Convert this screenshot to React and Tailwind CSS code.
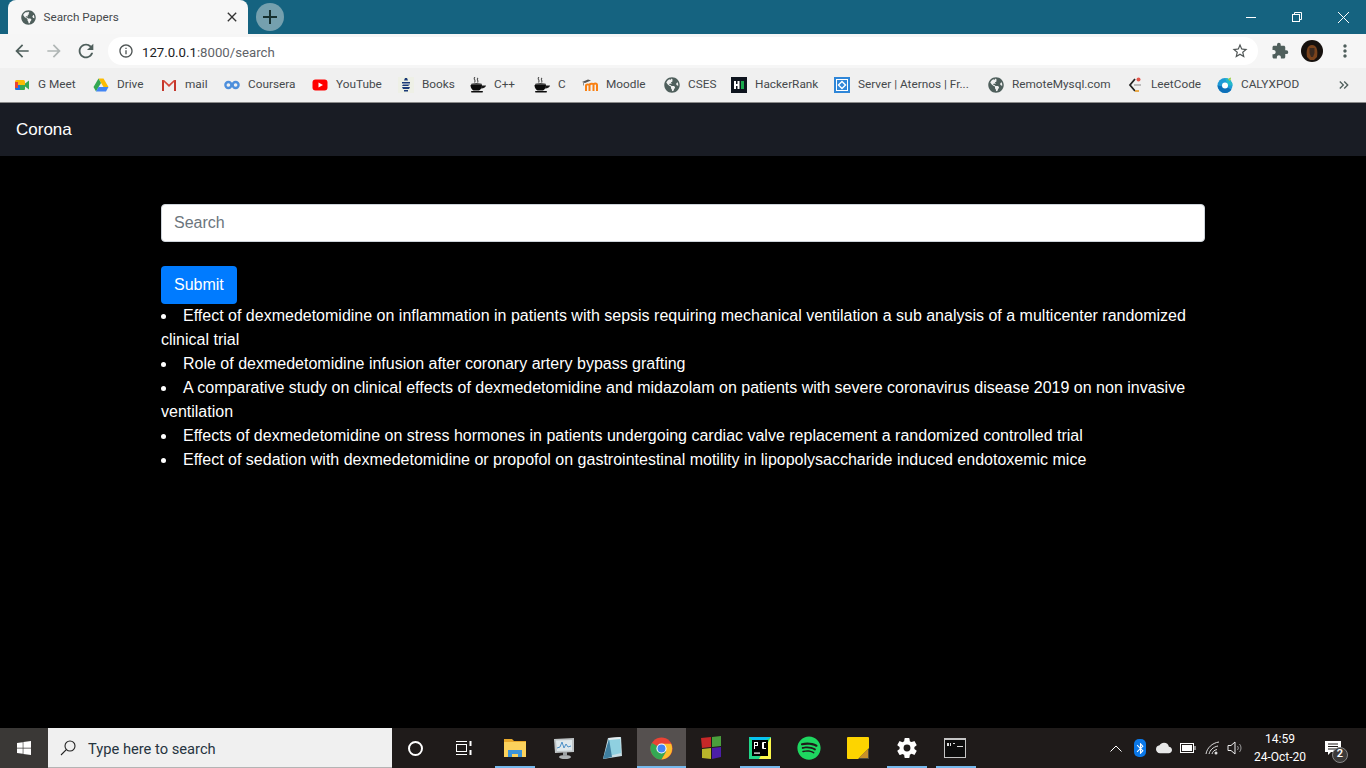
import { FaGlobeAmericas, FaSpotify, FaWindows } from 'react-icons/fa'
import {
  MdArrowBack, MdArrowForward, MdRefresh, MdInfoOutline, MdStarBorder, MdExtension,
  MdMoreVert, MdKeyboardDoubleArrowRight, MdBluetooth, MdCloud, MdClose, MdAdd,
} from 'react-icons/md'
import { IoSettingsSharp } from 'react-icons/io5'

const Globe = () => <FaGlobeAmericas className="w-4 h-4 text-[#4f5f5c]" />

const Meet = () => (
  <svg viewBox="0 0 16 16" className="w-4 h-4">
    <rect x="1" y="3" width="10" height="10" rx="1.5" fill="#fbbc04" />
    <path d="M1 8h5v5H2.500A1.500 1.500 0 0 1 1 11.500z" fill="#1a73e8" />
    <path d="M6 8h5v3.500A1.500 1.500 0 0 1 9.500 13H6z" fill="#34a853" />
    <path d="M1 5h3v6H1z" fill="#ea4335" />
    <path d="M11 6.500 15 3.500v9l-4-3z" fill="#34a853" />
  </svg>
)
const Drive = () => (
  <svg viewBox="0 0 16 16" className="w-4 h-4">
    <path d="M5.500 1.500h5L15.500 10h-5z" fill="#fbbc04" />
    <path d="M5.500 1.500 .5 10 3 14.500 8 6z" fill="#34a853" />
    <path d="M3 14.500h10l2.500-4.500H5.500z" fill="#4285f4" />
  </svg>
)
const Gmail = () => (
  <svg viewBox="0 0 16 16" className="w-4 h-4">
    <path d="M1 3h2v11H1zM13 3h2v11h-2z" fill="#c5372c" />
    <path d="M1 3h2l5 4.500L13 3h2L8 10z" fill="#d5483a" />
  </svg>
)
const Coursera = () => (
  <svg viewBox="0 0 16 16" className="w-4 h-4" fill="none" stroke="#4d8fdc" strokeWidth="2.400">
    <circle cx="4.400" cy="8" r="3" />
    <circle cx="11.600" cy="8" r="3" />
  </svg>
)
const YouTube = () => (
  <svg viewBox="0 0 16 16" className="w-4 h-4">
    <rect x="0.500" y="2.500" width="15" height="11" rx="3" fill="#f00" />
    <path d="M6.500 5.500v5L11 8z" fill="#fff" />
  </svg>
)
const Books = () => (
  <svg viewBox="0 0 16 16" className="w-4 h-4">
    <rect width="16" height="16" fill="#eef0e6" />
    <path d="M7 1h2l1 2.500H6zM4 5h8v1.500H4zM5 7.500h7L10 9H4zM4 10h8l-1 2H5zM6 13h4v1.500H6z" fill="#1b3a78" />
  </svg>
)
const Cup = () => (
  <svg viewBox="0 0 16 16" className="w-4 h-4">
    <path d="M5 0c-2.500 2 1.500 3-.5 5.500M8 1c-2 2 1 2.500-.5 4.500" fill="none" stroke="#555" strokeWidth="1.100" />
    <ellipse cx="6.500" cy="7.500" rx="5.500" ry="1.500" fill="#444" />
    <path d="M0.500 8h11.500c0 3-1.500 4.500-3 5.500H3.500C2 12.500.5 11 .5 8z" fill="#0c0c0c" />
    <path d="M11.500 8.500H16c0 1.500-2 3-5 3z" fill="#1a1a1a" />
    <rect x="1" y="14" width="12" height="1.600" rx=".8" fill="#0c0c0c" />
  </svg>
)
const Moodle = () => (
  <svg viewBox="0 0 16 16" className="w-4 h-4">
    <path d="M0 5 6 2.500l3 1-6 2.500z" fill="#555" />
    <path d="M1.500 5.500v3" stroke="#777" strokeWidth=".8" />
    <path d="M4 14V8.500c0-1.500 3.500-1.500 3.500 0V14M7.500 8.500c0-2 4-2.500 4-.5M11.500 14V8c0-2 3.500-2 3.500 0v6" fill="none" stroke="#f98012" strokeWidth="2" />
  </svg>
)
const HackerRank = () => (
  <svg viewBox="0 0 16 16" className="w-4 h-4">
    <rect width="16" height="16" fill="#0e141e" />
    <path d="M3 4h2v3h1.500V4h2v8h-2V9H5v3H3z" fill="#fff" />
    <rect x="10" y="4" width="3" height="8" fill="#1ba94c" />
  </svg>
)
const Aternos = () => (
  <svg viewBox="0 0 16 16" className="w-4 h-4">
    <rect width="16" height="16" fill="#2f86d8" />
    <rect x="2.500" y="2.500" width="11" height="11" fill="none" stroke="#fff" strokeWidth="1" />
    <path d="M8 4.500 11.500 8 8 11.500 4.500 8z" fill="none" stroke="#fff" strokeWidth="1.400" />
  </svg>
)
const LeetCode = () => (
  <svg viewBox="0 0 16 16" className="w-4 h-4">
    <path d="M8 2 3 8l5 6" fill="none" stroke="#222" strokeWidth="1.800" />
    <path d="M8 14h4" stroke="#e8a33a" strokeWidth="1.800" />
    <path d="M7 8h7" stroke="#aaa" strokeWidth="1.500" />
    <circle cx="11.500" cy="2.500" r="2" fill="#e2574c" />
  </svg>
)
const Calyx = () => (
  <svg viewBox="0 0 16 16" className="w-4 h-4">
    <circle cx="8" cy="8.500" r="7.500" fill="#1f9ad6" />
    <path d="M8 1a7.500 7.500 0 0 1 7.500 7.500H11z" fill="#23b9c9" />
    <path d="M.5 8.500A7.500 7.500 0 0 0 8 16a7.500 7.500 0 0 0 6.500-3.500L9 10z" fill="#0d6fb8" />
    <circle cx="8" cy="8.500" r="3" fill="#fff" />
    <path d="M11 2c1-1 2-1.500 3-1.500 0 1.500-.5 3-1.500 3.500z" fill="#9bd14a" />
  </svg>
)

const bookmarks = [
  { Icon: Meet, label: 'G Meet', w: 'w-[39px]' },
  { Icon: Drive, label: 'Drive', w: 'w-[28px]' },
  { Icon: Gmail, label: 'mail', w: 'w-[23px]' },
  { Icon: Coursera, label: 'Coursera', w: 'w-[48px]' },
  { Icon: YouTube, label: 'YouTube', w: 'w-[46px]' },
  { Icon: Books, label: 'Books', w: 'w-[32px]' },
  { Icon: Cup, label: 'C++', w: 'w-[24px]' },
  { Icon: Cup, label: 'C', w: 'w-[8px]' },
  { Icon: Moodle, label: 'Moodle', w: 'w-[42px]' },
  { Icon: Globe, label: 'CSES', w: 'w-[27px]' },
  { Icon: HackerRank, label: 'HackerRank', w: 'w-[63px]' },
  { Icon: Aternos, label: 'Server | Aternos | Fr...', w: 'w-[114px]' },
  { Icon: Globe, label: 'RemoteMysql.com', w: 'w-[99px]' },
  { Icon: LeetCode, label: 'LeetCode', w: 'w-[50px]' },
  { Icon: Calyx, label: 'CALYXPOD', w: 'w-[58px]' },
]

const papers = [
  'Effect of dexmedetomidine on inflammation in patients with sepsis requiring mechanical ventilation a sub analysis of a multicenter randomized clinical trial',
  'Role of dexmedetomidine infusion after coronary artery bypass grafting',
  'A comparative study on clinical effects of dexmedetomidine and midazolam on patients with severe coronavirus disease 2019 on non invasive ventilation',
  'Effects of dexmedetomidine on stress hormones in patients undergoing cardiac valve replacement a randomized controlled trial',
  'Effect of sedation with dexmedetomidine or propofol on gastrointestinal motility in lipopolysaccharide induced endotoxemic mice',
]

function TitleBar() {
  return (
    <div className="h-[34px] bg-[#156380] flex items-stretch shrink-0">
      <div className="ml-2 w-[240px] bg-[#f7f7f7] rounded-t-lg flex items-center pl-3 pr-2 gap-2">
        <FaGlobeAmericas className="w-[15px] h-[15px] text-[#4f5f5c] ml-[0.5px]" />
        <span className="flex-1 mt-[2px] text-[11.7px] text-[#45494c]">Search Papers</span>
        <MdClose className="w-4 h-4 text-[#333]" />
      </div>
      <div className="ml-2 self-center w-7 h-7 rounded-full bg-[#75a0ae] flex items-center justify-center">
        <MdAdd className="w-6 h-6 text-[#16302f]" />
      </div>
      <div className="flex-1" />
      <div className="w-[46px] flex items-center justify-center">
        <div className="w-[10px] h-px bg-white" />
      </div>
      <div className="w-[46px] flex items-center justify-center">
        <svg viewBox="0 0 10 10" className="w-[10px] h-[10px]" fill="none" stroke="#fff" strokeWidth="1">
          <rect x="0.500" y="2.500" width="7" height="7" />
          <path d="M2.500 2.500V.5h7v7h-2" />
        </svg>
      </div>
      <div className="w-[46px] flex items-center justify-center">
        <svg viewBox="0 0 11 11" className="w-[11px] h-[11px]" stroke="#fff" strokeWidth="1">
          <path d="M0 0l11 11M11 0 0 11" />
        </svg>
      </div>
    </div>
  )
}

function Toolbar() {
  return (
    <div className="h-[34px] bg-[#f6f6f6] flex items-center shrink-0">
      <div className="w-[108px] flex items-center pl-[12px] gap-[12px]">
        <MdArrowBack className="w-[20px] h-[20px] text-[#4f5f5c]" />
        <MdArrowForward className="w-[20px] h-[20px] text-[#b0b6b5]" />
        <MdRefresh className="w-[22px] h-[22px] -ml-px text-[#4f5f5c]" />
      </div>
      <div className="w-[1150px] h-[28px] bg-white rounded-full flex items-center pl-[10px] pr-[9px]">
        <MdInfoOutline className="w-[16px] h-[16px] text-[#4f5555]" />
        <span className="ml-2 mt-[4px] flex-1 text-[13.2px] text-[#202124]">
          127.0.0.1<span className="text-[#5f6368]">:8000/search</span>
        </span>
        <MdStarBorder className="w-[18px] h-[18px] text-[#4f5555]" />
      </div>
      <div className="flex-1 flex items-center pl-[13px]">
        <MdExtension className="w-[18px] h-[18px] text-[#4f5f5c]" />
        <svg viewBox="0 0 22 22" className="w-[22px] h-[22px] ml-[12px]">
          <circle cx="11" cy="11" r="11" fill="#16110e" />
          <path d="M6 17c-1-6 0-12 5-12s6 6 5 12l-3 3H9z" fill="#7a431c" />
          <path d="M8.500 8h5v5l-1.500 4h-2l-1.500-4z" fill="#3a2a20" />
        </svg>
        <MdMoreVert className="w-[20px] h-[20px] ml-[12px] text-[#4f5f5c]" />
      </div>
    </div>
  )
}

function BookmarkBar() {
  return (
    <div className="h-[35px] pb-px bg-[#f0f0f0] border-b border-[#8a8a8a] flex items-center pl-[14px] gap-4 shrink-0">
      {bookmarks.map((b, i) => (
        <div key={i} className="flex items-center gap-2">
          <b.Icon />
          <span className={`${b.w} whitespace-nowrap text-[11.8px] text-[#45494c]`}>{b.label}</span>
        </div>
      ))}
      <MdKeyboardDoubleArrowRight className="ml-[21px] w-4 h-4 text-[#4f5f5c]" />
    </div>
  )
}

const Folder = () => (
  <svg viewBox="0 0 22 20" className="w-[22px] h-[20px]">
    <path d="M0 1h8l2 2h12v5H0z" fill="#e8a92b" />
    <rect y="4" width="22" height="15" fill="#fbd25c" />
    <path d="M4 19v-7h14v7h-4v-3H8v3z" fill="#3c94d8" />
  </svg>
)
const ResMonitor = () => (
  <svg viewBox="0 0 24 24" className="w-6 h-6">
    <path d="M2 3l20-1v14L3 17z" fill="#bfc4c6" />
    <path d="M4 4.500l16-.5v10.500L5 15z" fill="#dfe8ec" />
    <path d="M5 12l3-1 2-5 2 6 2-4 2 3 3-1" fill="none" stroke="#4c90c8" strokeWidth="1" />
    <ellipse cx="13" cy="21" rx="6" ry="2" fill="#aeb2b4" />
    <rect x="11" y="16" width="4" height="4" fill="#9b9fa1" />
  </svg>
)
const Notes = () => (
  <svg viewBox="0 0 24 24" className="w-6 h-6 -ml-[2px]">
    <path d="M8 2l13-1 1 19-19 3z" fill="#c9dfe6" />
    <path d="M9 3l11-1 1 15-16 4z" fill="#8fd0e0" />
    <path d="M3 23 9 3l3 18z" fill="#3f7fa0" />
    <path d="M9 2l11-1v2L9 4z" fill="#e6edf0" />
  </svg>
)
const Chrome = () => (
  <svg viewBox="0 0 24 24" className="w-[23px] h-[23px]">
    <circle cx="12" cy="12" r="11.500" fill="#ea4335" />
    <path d="M12 12 2 6.200A11.500 11.500 0 0 0 12 23.500l5-8.500z" fill="#34a853" />
    <path d="M12 7h10a11.500 11.500 0 0 1-10 16.500L17 15z" fill="#fbc02d" />
    <circle cx="12" cy="12" r="5.300" fill="#fff" />
    <circle cx="12" cy="12" r="4.200" fill="#4285f4" />
  </svg>
)
const Colors = () => (
  <svg viewBox="0 0 22 24" className="w-[22px] h-[24px]">
    <path d="M1 2l10-1v10l-9 1z" fill="#c62828" />
    <path d="M12 1l9-1v10l-9 1z" fill="#4a9e3c" />
    <path d="M2 13l9-1v11l-9-1z" fill="#b8b62a" />
    <path d="M12 12l9-1v10l-9 2z" fill="#4c1fa8" />
  </svg>
)
const PyCharm = () => (
  <svg viewBox="0 0 22 22" className="w-[22px] h-[22px]">
    <rect width="22" height="22" fill="#21d789" />
    <path d="M22 0v22H10z" fill="#fcf84a" />
    <path d="M0 0h22L8 8z" fill="#07c3f2" />
    <rect x="3" y="3" width="16" height="16" fill="#000" />
    <path d="M5 5h4v4H6v3H5zM6 6v2h2V6zM14 5h3v1h-2v5h2v1h-3a1 1 0 0 1-1-1V6a1 1 0 0 1 1-1z" fill="#fff" />
    <rect x="5" y="15.500" width="6" height="1.200" fill="#fff" />
  </svg>
)
const Sticky = () => (
  <svg viewBox="0 0 22 22" className="w-[22px] h-[22px]">
    <rect width="22" height="22" rx="1" fill="#fdd400" />
    <path d="M22 11v11H11z" fill="#4d4a3a" />
    <path d="M21 12v9H12z" fill="#c7902a" />
  </svg>
)
const Terminal = () => (
  <svg viewBox="0 0 22 20" className="w-[22px] h-[20px] -ml-px">
    <rect width="22" height="20" fill="#c5c5c5" />
    <rect y="2" x="1" width="20" height="17" fill="#0c0c0c" />
    <path d="M3 5h2v3H3zM6 5h1v3H6zM9 5h2v1H9zM13 8h6v1h-6z" fill="#ddd" />
  </svg>
)

const apps = [
  { Icon: Folder, line: 'w-[40px]' },
  { Icon: ResMonitor },
  { Icon: Notes },
  { Icon: Chrome, active: true, line: 'w-full' },
  { Icon: Colors },
  { Icon: PyCharm, line: 'w-[40px]' },
  { Icon: () => <FaSpotify className="w-6 h-6 text-[#1ed760]" /> },
  { Icon: Sticky },
  { Icon: () => <IoSettingsSharp className="w-[22px] h-[22px] text-white" />, line: 'w-[40px]' },
  { Icon: Terminal, line: 'w-[40px]' },
]

function Taskbar() {
  return (
    <div className="h-[40px] bg-[#1f1b1a] flex items-stretch shrink-0">
      <div className="w-[48px] bg-[#3a3836] flex items-center justify-center">
        <FaWindows className="w-4 h-4 text-white" />
      </div>
      <div className="w-[344px] bg-[#f0f0f0] border-b border-[#b4b4b4] flex items-center pl-[12px]">
        <svg viewBox="0 0 16 16" className="w-4 h-4" fill="none" stroke="#222" strokeWidth="1.100">
          <circle cx="10" cy="6" r="5" />
          <path d="M6.300 9.700 1 15" />
        </svg>
        <span className="ml-[12px] mt-[4px] text-[14.7px] text-[#26343f]">Type here to search</span>
      </div>
      <div className="w-[49px] flex items-center justify-center">
        <div className="w-[15px] h-[15px] -ml-[2px] rounded-full border-2 border-white" />
      </div>
      <div className="w-[49px] flex items-center justify-center">
        <svg viewBox="0 0 18 16" className="w-[18px] h-[16px] -ml-[3px]" fill="none" stroke="#fff" strokeWidth="1">
          <path d="M1 1.500h11M1 14.500h11" />
          <rect x="1.500" y="4.500" width="10" height="7" />
          <path d="M15.500 1v5M15.500 10v5" strokeWidth="2" />
        </svg>
      </div>
      {apps.map((a, i) => (
        <div key={i} className={`relative w-[49px] flex items-center justify-center ${a.active ? 'bg-[#55504f]' : ''}`}>
          <a.Icon />
          {a.line && <div className={`absolute bottom-0 h-[2px] bg-[#76b9ed] ${a.line}`} />}
        </div>
      ))}
      <div className="flex-1 flex items-center pl-[130px] text-white">
        <svg viewBox="0 0 12 7" className="w-[12px] h-[7px]" fill="none" stroke="#fff" strokeWidth="1">
          <path d="M.5 6.500 6 1l5.500 5.500" />
        </svg>
        <div className="ml-[12px] w-[12px] h-[18px] rounded-[5px] bg-[#0a78e8] flex items-center justify-center">
          <MdBluetooth className="w-[13px] h-[13px] text-white shrink-0" />
        </div>
        <MdCloud className="ml-[10px] w-[16px] h-[16px] text-[#e8e8e8]" />
        <svg viewBox="0 0 16 10" className="ml-[8px] w-[16px] h-[10px]" fill="none" stroke="#fff">
          <rect x=".5" y=".5" width="13" height="9" />
          <rect x="2" y="2" width="10" height="6" fill="#fff" stroke="none" />
          <path d="M15 3v4" />
        </svg>
        <svg viewBox="0 0 16 16" className="ml-[9px] w-[16px] h-[16px]" fill="none" stroke="#ddd" strokeWidth="1">
          <path d="M1 14C2 8 7 3 14 2M4 14c1-4 4-7 9-8M7 14c.5-2 2-4 5-4.500" />
          <circle cx="11" cy="13" r="1.500" fill="#ddd" stroke="none" />
        </svg>
        <svg viewBox="0 0 16 14" className="ml-[6px] w-[16px] h-[14px]" fill="none" stroke="#eee" strokeWidth="1">
          <path d="M1 4.500h3L8 1v12L4 9.500H1z" />
          <path d="M10.500 5a3 3 0 0 1 0 4M12.500 3a6 6 0 0 1 0 8" stroke="#999" />
        </svg>
        <div className="w-[74px] flex flex-col items-center text-[12px] leading-[18px] -mt-px">
          <span>14:59</span>
          <span>24-Oct-20</span>
        </div>
        <div className="relative ml-[8px]">
          <svg viewBox="0 0 16 15" className="w-[16px] h-[15px]">
            <path d="M0 0h16v11H6l-3 3v-3H0z" fill="#fff" />
            <path d="M3 3h10M3 5.500h10M3 8h10" stroke="#1f1b1a" />
          </svg>
          <div className="absolute left-[7px] top-[6px] w-[16px] h-[16px] rounded-full bg-[#3c3a39] border border-[#888] flex items-center justify-center text-[11px] font-semibold text-white">
            2
          </div>
        </div>
      </div>
    </div>
  )
}

export default function App() {
  return (
    <div className="h-screen flex flex-col overflow-hidden bg-black font-['Liberation_Sans',sans-serif]">
      <div className="font-['Roboto',sans-serif] shrink-0">
        <TitleBar />
        <Toolbar />
        <BookmarkBar />
      </div>
      <nav className="h-[53px] bg-[#191c24] flex items-center px-4 shrink-0">
        <span className="text-white text-[17px]">Corona</span>
      </nav>
      <main className="flex-1 px-[161px] pt-[48px] text-white text-base leading-6">
        <input
          placeholder="Search"
          className="block w-full h-[38px] bg-white text-[#495057] rounded border border-[#ced4da] px-3 placeholder:text-[#6c757d] outline-none"
        />
        <button className="mt-6 block h-[38px] px-[13px] bg-[#007bff] text-white rounded">Submit</button>
        <ul className="list-disc list-inside">
          {papers.map((p, i) => <li key={i}>{p}</li>)}
        </ul>
      </main>
      <div className="font-['Roboto',sans-serif] shrink-0">
        <Taskbar />
      </div>
    </div>
  )
}
